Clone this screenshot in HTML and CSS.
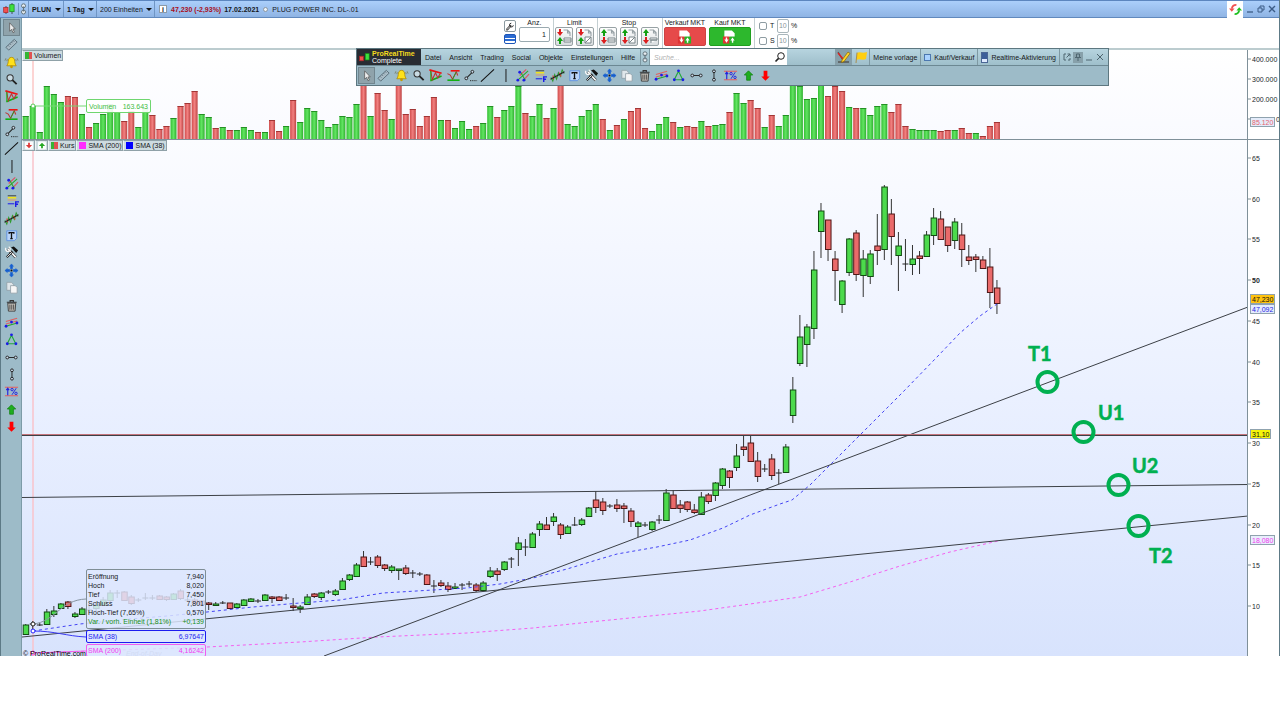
FILE: index.html
```html
<!DOCTYPE html>
<html lang="de">
<head>
    <meta charset="UTF-8">
    <title>PLUG POWER INC. - ProRealTime</title>
    <meta name="viewport" content="width=device-width, initial-scale=1">
    <link rel="stylesheet" href="styles.css">
</head>
<body>
<!-- Icons -->
<svg class="sprite" aria-hidden="true">
    <defs>
        <linearGradient id="gUp"><stop offset="0" stop-color="#35bf35"/><stop offset=".5" stop-color="#62e562"/><stop offset="1" stop-color="#2fae2f"/></linearGradient>
        <linearGradient id="gDown"><stop offset="0" stop-color="#d04c4c"/><stop offset=".5" stop-color="#f28080"/><stop offset="1" stop-color="#bc4242"/></linearGradient>
    </defs>
    <symbol id="i-logo" viewBox="0 0 12 12"><path d="M3 3v8M9 0v11" stroke="#333" stroke-width=".8"/><rect x=".7" y="4.6" width="4.3" height="5" fill="#f05050" stroke="#b02020" stroke-width=".7"/><rect x="6.8" y="1.7" width="4.3" height="7" fill="#3fe03f" stroke="#158815" stroke-width=".7"/></symbol>
    <symbol id="i-chain" viewBox="0 0 8 12"><g fill="#e8eef2" stroke="#65757e"><rect x="2" y=".8" width="4" height="4" rx="2"/><rect x="2" y="7" width="4" height="4" rx="2"/><path d="M4 3.5v5"/></g></symbol>
    <symbol id="i-cursor" viewBox="0 0 16 16"><path d="M6 3v9l2-2 1.7 3.6 1.4-.7-1.6-3.4H12z" fill="#eee" stroke="#555" stroke-width=".8"/></symbol>
    <symbol id="i-ruler" viewBox="0 0 16 16"><path d="M2 11 11 2.500l3 3L5 14z" fill="#a9bcc6" stroke="#4f6470" stroke-width=".9"/><path d="m4.500 9 1.200 1.200M6.300 7.200l1.200 1.200M8 5.500l1.200 1.200M9.800 3.900 11 5.100" stroke="#4f6470" stroke-width=".8"/></symbol>
    <symbol id="i-bell" viewBox="0 0 16 16"><path d="M8 2.500c-2.600 0-3.300 2-3.500 4.500S3.500 10.500 3 11.500h10c-.5-1-1.300-2-1.500-4.500S10.600 2.500 8 2.500z" fill="#ffe11a" stroke="#a98600" stroke-width=".8"/><circle cx="8" cy="12.500" r="1.500" fill="#c49a00"/><path d="M2 3.500 1 6M14 3.500 15 6M3.500 4.500 3 6.500M12.500 4.500l.5 2" stroke="#6d6d4c" stroke-width=".7" fill="none"/></symbol>
    <symbol id="i-zoom" viewBox="0 0 16 16"><circle cx="6.500" cy="6.200" r="3.300" fill="#c9dbe3" stroke="#333" stroke-width="1.100"/><path d="m9 8.700 4.500 4.300" stroke="#222" stroke-width="2"/></symbol>
    <symbol id="i-pattern" viewBox="0 0 16 16"><path d="m1.500 2 13 3.500" stroke="#f01010" stroke-width="1.700"/><path d="m2.500 13.500 12-5" stroke="#12b012" stroke-width="1.700"/><path d="m3 3 1.500 9.500L8 5l2.500 5.500L13 6" fill="none" stroke="#c03030" stroke-width="1.100"/><path d="M3 3v10" stroke="#12b012"/></symbol>
    <symbol id="i-support" viewBox="0 0 16 16"><path d="M5 3h9.500" stroke="#f01010" stroke-width="1.700"/><path d="M1.500 13h13" stroke="#12b012" stroke-width="1.700"/><path d="m1.500 6 3 1.500L7 12l4-8 1.500 4" fill="none" stroke="#c03030" stroke-width="1.100"/><path d="m7 12 4-8" stroke="#259c25"/></symbol>
    <symbol id="i-segment" viewBox="0 0 16 16"><path d="m4 10.500 6-6" stroke="#222" stroke-width="1.100"/><circle cx="3.500" cy="11" r="1.500" fill="#cde" stroke="#222"/><circle cx="10" cy="4" r="1.500" fill="#cde" stroke="#222"/><path d="M7.500 13.500H15" stroke="#222" stroke-dasharray="1.300 1"/></symbol>
    <symbol id="i-line" viewBox="0 0 16 16"><path d="m1 14.500 14-13" stroke="#111" stroke-width="1.100"/></symbol>
    <symbol id="i-vline" viewBox="0 0 16 16"><path d="M8.500 1v14" stroke="#222" stroke-width="1.100"/></symbol>
    <symbol id="i-fork" viewBox="0 0 16 16"><path d="m5 8 7-6.500M9 13l6-6.500" stroke="#e05060" stroke-width="1.100"/><path d="m3 13 11-10M6 4.500 11 13" stroke="#2aa52a" stroke-width="1.100"/><g fill="#1c1ce8"><circle cx="5" cy="4.500" r="1.500"/><circle cx="3" cy="13" r="1.500"/><circle cx="9.500" cy="13" r="1.500"/></g></symbol>
    <symbol id="i-fibo" viewBox="0 0 16 16"><path d="M4 3h9" stroke="#333"/><path d="M4 5h9" stroke="#f2e21c" stroke-width="1.800"/><path d="M4 7.500h9" stroke="#e89a60"/><path d="M4 11.500h7" stroke="#1c1ce8" stroke-width="1.100"/><path d="M12.500 15V9.500H16M12.500 12H15" fill="none" stroke="#1c1ce8" stroke-width="1.500"/></symbol>
    <symbol id="i-regress" viewBox="0 0 16 16"><path d="m1 10 2 4 2-7 2 5 2-7 2 4 2-7 2 4" fill="none" stroke="#2d9a2d" stroke-width="1.100"/><path d="m3 8 1 4m6-7 2 4" stroke="#e04030" stroke-width="1.100"/><path d="m.5 12 15-8" stroke="#222" stroke-width="1.100"/></symbol>
    <symbol id="i-text" viewBox="0 0 16 16"><path d="M3 3h10.500v8l-2.500 2.500H3z" fill="#b9d3f7" stroke="#5f92e0"/><path d="M5.500 6V5h5v1M8 5v6.300M6.700 11.300h2.600" fill="none" stroke="#111" stroke-width="1.400"/></symbol>
    <symbol id="i-tools" viewBox="0 0 16 16"><path d="m4 4 8.500 9" stroke="#444" stroke-width="3.200"/><path d="m4 4 8.500 9" stroke="#fff" stroke-width="1.700"/><path d="M2 3a2.500 2.500 0 1 0 3-1" fill="none" stroke="#f6f6f6" stroke-width="1.400"/><path d="m3 13 6-6" stroke="#222" stroke-width="2.200"/><path d="m3.300 12.700 5-5" stroke="#e9e9e9"/><path d="m7.500 2.500 3-1L15 5.500l-2 3z" fill="#111"/></symbol>
    <symbol id="i-move" viewBox="0 0 16 16"><path d="m8 1 2 2.500H9V6H7V3.500H6zM8 15l2-2.500H9V10H7v2.500H6zM1 8l2.500-2v1H6v2H3.500v1zM15 8l-2.500-2v1H10v2h2.500v1z" fill="#155fd0" stroke="#155fd0" stroke-width=".7"/><rect x="7" y="7" width="2" height="2" fill="#111"/></symbol>
    <symbol id="i-copy" viewBox="0 0 16 16"><path d="M3 2.500h5l2 2V11H3z" fill="#dfe6ea" stroke="#8d9ba3" stroke-width=".8"/><path d="M7 6h5l2 2v6H7z" fill="#f6f6f6" stroke="#8d9ba3" stroke-width=".8"/></symbol>
    <symbol id="i-trash" viewBox="0 0 16 16"><path d="M4 5.500h8.500l-.7 8.500H4.700z" fill="#c7c2ba" stroke="#333" stroke-width=".9"/><path d="M3 4.500h10.500M6.500 4V2.800H10V4" stroke="#333" fill="none" stroke-width="1.200"/><path d="M6.300 7v5.500M8.300 7v5.500M10.300 7v5.500" stroke="#444"/></symbol>
    <symbol id="i-channel" viewBox="0 0 16 16"><path d="m2 7 12-3.500M2 9.500l12-3" stroke="#e06060" stroke-width="1.100"/><path d="m2 12 12-3.500" stroke="#2aa52a" stroke-width="1.300"/><g fill="#1c1ce8"><circle cx="2.200" cy="12" r="1.500"/><circle cx="13.800" cy="8.500" r="1.500"/><circle cx="8" cy="7.500" r="1.500"/></g></symbol>
    <symbol id="i-triangle" viewBox="0 0 16 16"><path d="m8 3.500 4.500 9h-9z" fill="none" stroke="#23a83b" stroke-width="1.200"/><g fill="#1c1ce8"><circle cx="8" cy="3" r="1.500"/><circle cx="3.500" cy="12.500" r="1.500"/><circle cx="12.700" cy="12.500" r="1.500"/></g></symbol>
    <symbol id="i-hseg" viewBox="0 0 16 16"><path d="M4 8h8" stroke="#222"/><circle cx="3.500" cy="8" r="1.500" fill="#cde" stroke="#222"/><circle cx="12.500" cy="8" r="1.500" fill="#cde" stroke="#222"/></symbol>
    <symbol id="i-vseg" viewBox="0 0 16 16"><path d="M8.500 4v8" stroke="#222"/><circle cx="8.500" cy="3.500" r="1.500" fill="#cde" stroke="#222"/><circle cx="8.500" cy="12.500" r="1.500" fill="#cde" stroke="#222"/></symbol>
    <symbol id="i-percent" viewBox="0 0 16 16"><path d="M1 3.500h14M1 12.500h14" stroke="#e85c5c" stroke-width="1.200"/><path d="M4 12V5M2.500 6.500 4 4.500l1.500 2" fill="none" stroke="#2222dd" stroke-width="1.200"/><path d="m8.500 11.500 4.500-7" stroke="#2222dd"/><g fill="none" stroke="#2222dd"><circle cx="8.600" cy="6" r="1.300"/><circle cx="12.800" cy="10" r="1.300"/></g></symbol>
    <symbol id="i-up" viewBox="0 0 16 16"><path d="m8 3 4.500 4.500H10V13H6V7.500H3.500z" fill="#1fae1f" stroke="#128012" stroke-width=".8"/></symbol>
    <symbol id="i-down" viewBox="0 0 16 16"><path d="m8 13.500 4.500-4.500H10V3H6v6H3.500z" fill="#f00"/></symbol>
    <symbol id="i-wrench" viewBox="0 0 12 12"><path d="m2.500 9.500 4-4" stroke="#222" stroke-width="2.600" stroke-linecap="round"/><path d="m2.500 9.500 4-4" stroke="#fff" stroke-width="1.200" stroke-linecap="round"/><path d="M10 4.500A2.300 2.300 0 1 1 7.500 2" fill="none" stroke="#222" stroke-width="1.100"/></symbol>
    <symbol id="i-refresh" viewBox="0 0 14 14"><path d="M8 2a5 5 0 0 0-5 4" fill="none" stroke="#f05050" stroke-width="2"/><path d="M0 6h6L3 9.500z" fill="#f05050"/><path d="M6 12a5 5 0 0 0 5-4" fill="none" stroke="#1fbf1f" stroke-width="2"/><path d="M8 8h6l-3-3.500z" fill="#1fbf1f"/></symbol>
    <symbol id="i-doc" viewBox="0 0 16 16"><path d="M7.500 2h4l2.500 2.500V8M11.500 2v3H14" fill="none" stroke="#98a2a6" stroke-width="1.100"/></symbol>
    <symbol id="i-rd" viewBox="0 0 9 9"><rect width="9" height="9" rx="1" fill="#fafcfd"/><path d="M3.500 1.500h2V4H8L4.500 7.500 1 4h2.500z" fill="#dc3c3c"/></symbol>
    <symbol id="i-gu" viewBox="0 0 9 9"><rect width="9" height="9" rx="1" fill="#fafcfd"/><path d="M3.500 7.500h2V5H8L4.500 1.500 1 5h2.500z" fill="#25a825"/></symbol>
    <symbol id="i-market" viewBox="0 0 16 16"><path d="M2.500 8V1h8l3 3v4" fill="#fff"/><rect x="1" y="7.500" width="7" height="7.500" fill="#e03434"/><rect x="8" y="7.500" width="7" height="7.500" fill="#28b428"/><path d="M4 8.500h1.500v2.200H7L4.800 14 2.500 10.700H4zM10.500 14H12v-2.200h1.500L11.200 8.500 9 11.800h1.500z" fill="#fff"/></symbol>
</svg>

<div class="window">
    <header class="titlebar">
        <svg class="logo"><use href="#i-logo"/></svg>
        <svg class="link"><use href="#i-chain"/></svg>
        <label class="pick strong"><select aria-label="Wert"><option>PLUN</option></select></label>
        <label class="pick strong"><select aria-label="Zeiteinheit"><option>1 Tag</option></select></label>
        <label class="pick units"><select aria-label="Einheiten"><option>200 Einheiten</option></select></label>
        <button class="info" type="button">i</button>
        <span class="quote">47,230 (-2,93%)</span>
        <span class="date">17.02.2021</span>
        <span class="state"></span>
        <span class="name">PLUG POWER INC. DL-.01</span>
        <button class="refresh" type="button" aria-label="Aktualisieren"><svg><use href="#i-refresh"/></svg></button>
        <div class="winbtns">
            <button type="button" aria-label="Minimieren"><svg viewBox="0 0 8 8"><path d="M1 7h6" stroke-width="1.300"/></svg></button>
            <button type="button" aria-label="Wiederherstellen"><svg viewBox="0 0 8 8"><path d="M3 3V1h4v4H5M1 3h4v4H1z"/></svg></button>
            <button type="button" aria-label="Schließen"><svg viewBox="0 0 8 8"><path d="m1 1 6 6M7 1 1 7" stroke-width="1.400"/></svg></button>
        </div>
    </header>

    <div class="body">
        <aside class="sidebar"><div class="tools tools-v"></div></aside>

        <main class="main">
            <!-- Orderleiste -->
            <form class="orderbar">
                <div class="side">
                    <button class="wrench" type="button" aria-label="Einstellungen"><svg><use href="#i-wrench"/></svg></button>
                    <button class="book" type="button" aria-label="Orderbuch"></button>
                </div>
                <div class="group">
                    <label for="anz">Anz.</label>
                    <input class="qty" id="anz" type="text" value="1">
                </div>
                <div class="group sep">
                    <span>Limit</span>
                    <div class="row" id="limit"></div>
                </div>
                <div class="group sep">
                    <span>Stop</span>
                    <div class="row" id="stop"></div>
                </div>
                <div class="group sep">
                    <label for="sell">Verkauf MKT</label>
                    <button class="market sell" id="sell" type="button"><svg><use href="#i-market"/></svg></button>
                </div>
                <div class="group">
                    <label for="buy">Kauf MKT</label>
                    <button class="market buy" id="buy" type="button"><svg><use href="#i-market"/></svg></button>
                </div>
                <div class="limits">
                    <div class="limit"><label><input type="checkbox">T</label><input class="pct" type="text" value="10" aria-label="Target"><span>%</span></div>
                    <div class="limit"><label><input type="checkbox">S</label><input class="pct" type="text" value="10" aria-label="Stop"><span>%</span></div>
                </div>
            </form>

            <section class="panel volume">
                <div class="plot">
                    <svg class="canvas" id="volume" viewBox="22 50 1226 89" preserveAspectRatio="xMinYMin slice"></svg>
                    <div class="tags"><button type="button"><i class="sw kurs"></i>Volumen</button></div>
                    <div class="voltip"><span>Volumen</span><span>163.643</span></div>
                </div>
                <svg class="axis" id="volaxis" viewBox="1247 50 32 89"></svg>
            </section>

            <section class="panel price">
                <div class="plot">
                    <svg class="canvas" id="price" viewBox="22 140 1226 516" preserveAspectRatio="xMinYMin slice"></svg>
                    <div class="tags">
                        <button class="mini" type="button" aria-label="Verkaufen"><svg><use href="#i-rd"/></svg></button>
                        <button class="mini" type="button" aria-label="Kaufen"><svg><use href="#i-gu"/></svg></button>
                        <button type="button"><i class="sw kurs"></i>Kurs</button>
                        <button type="button"><i class="sw sma200"></i>SMA (200)</button>
                        <button type="button"><i class="sw sma38"></i>SMA (38)</button>
                    </div>
                    <div class="tips">
                        <dl class="tip">
                            <div><dt>Eröffnung</dt><dd>7,940</dd></div>
                            <div><dt>Hoch</dt><dd>8,020</dd></div>
                            <div><dt>Tief</dt><dd>7,450</dd></div>
                            <div><dt>Schluss</dt><dd>7,801</dd></div>
                            <div><dt>Hoch-Tief (7,65%)</dt><dd>0,570</dd></div>
                            <div class="var"><dt>Var. / vorh. Einheit (1,81%)</dt><dd>+0,139</dd></div>
                        </dl>
                        <dl class="tip blue"><div><dt>SMA (38)</dt><dd>6,97647</dd></div></dl>
                        <dl class="tip pink"><div><dt>SMA (200)</dt><dd>4,16242</dd></div></dl>
                    </div>
                </div>
                <svg class="axis" id="priceaxis" viewBox="1247 140 32 516"></svg>
            </section>

            <!-- ProRealTime Leiste -->
            <div class="palette">
                <div class="menubar">
                    <div class="brand"><svg><use href="#i-logo"/></svg><div><b>ProRealTime</b><span>Complete</span></div></div>
                    <nav>
                        <button type="button">Datei</button>
                        <button type="button">Ansicht</button>
                        <button type="button">Trading</button>
                        <button type="button">Social</button>
                        <button type="button">Objekte</button>
                        <button type="button">Einstellungen</button>
                        <button type="button">Hilfe</button>
                    </nav>
                    <svg class="chain"><use href="#i-chain"/></svg>
                    <div class="search">
                        <input type="search" placeholder="Suche..." aria-label="Suche">
                        <svg viewBox="0 0 12 12"><circle cx="7" cy="5" r="3.300" fill="none" stroke="#222"/><path d="M4.600 7.400 1.500 10.500" stroke="#222" stroke-width="1.600"/></svg>
                    </div>
                    <button class="tile on" type="button" aria-label="Zeichnen"><svg viewBox="0 0 14 14"><path d="M1 2 7 12M1 12h11" stroke="#555" stroke-width="1.300"/><path d="m1 3 6 7" stroke="#e02020" stroke-width="1.300"/><path d="m5 10 6-8 2 1.500-6 8-2.500 1z" fill="#ffd428" stroke="#8b6800" stroke-width=".7"/></svg></button>
                    <button class="tile" type="button" aria-label="Markierung"><svg viewBox="0 0 14 14"><path d="M3 3c3-2 5 1 10-1l-1 7c-4 2-6-1-9.500 1z" fill="#ffcf10"/><path d="M3 2.500 2 13" stroke="#a98f50"/></svg></button>
                    <button class="cell" type="button">Meine vorlage</button>
                    <button class="cell" type="button"><i class="box"></i>Kauf/Verkauf</button>
                    <button class="cell" type="button"><i class="rt"></i>Realtime-Aktivierung</button>
                    <div class="pbtns">
                        <button type="button" aria-label="Andocken"><svg viewBox="0 0 8 8"><path d="M3 1H1v6h2M5 7h2V5M3.500 4.500 7 1M4.500 1H7v2.500"/></svg></button>
                        <button class="on" type="button" aria-label="Anheften"><svg viewBox="0 0 8 8"><path d="M2.500 1h3v3.500h-3zM1 4.500h6M4 4.500V8"/></svg></button>
                        <button type="button" aria-label="Minimieren"><svg viewBox="0 0 8 8"><path d="M1 7h6"/></svg></button>
                        <button type="button" aria-label="Schließen"><svg viewBox="0 0 8 8"><path d="m1 1 6 6M7 1 1 7"/></svg></button>
                    </div>
                </div>
                <div class="toolrow"><div class="tools tools-h"></div></div>
            </div>
        </main>
    </div>
</div>
<script src="chart.js"></script>
</body>
</html>
```

FILE: styles.css
```css
* { box-sizing: border-box; }
body { margin: 0; background: #fff; color: #16181a; font: 7px/9px "Liberation Sans", Arial, sans-serif; }
button, input, select { font: inherit; color: inherit; margin: 0; padding: 0; border: 0; background: none; border-radius: 0; }
button { cursor: pointer; display: flex; align-items: center; justify-content: center; }
svg { display: block; }
.sprite { position: absolute; width: 0; height: 0; }

.window { border-right: 1px solid #5d7a86; }
.body { display: flex; }
.main { flex: 1; min-width: 0; position: relative; }

/* Titelleiste */
.titlebar { display: flex; align-items: center; height: 18px; background: linear-gradient(#abcffb, #8fb4e4); border-top: 1px solid #5c86bf; border-bottom: 1px solid #6189bd; white-space: nowrap; }
.logo { width: 12px; height: 12px; margin: 0 3px; }
.link { width: 10px; height: 12px; border-left: 1px solid #6f95c4; }
.pick { display: flex; align-items: center; align-self: stretch; gap: 3px; padding: 0 2px 0 3px; border-left: 1px solid #6f95c4; }
.pick select { appearance: none; outline: none; }
.pick::after { content: ""; border: 3px solid transparent; border-top-color: #111; border-bottom: 0; }
.units { border-right: 1px solid #6f95c4; }
.strong, .date { font-weight: bold; }
.info { width: 8px; height: 8px; margin: 0 4px; background: #fff; border: 1px solid #8c9aa8; font-weight: bold; }
.quote { color: #a80f1c; font-weight: bold; }
.date { margin: 0 4px 0 3px; }
.state { width: 5px; height: 5px; border: 1px solid #8d98a2; border-radius: 50%; background: #eef3f8; margin-right: 4px; }
.name { flex: 1; }
.refresh { width: 16px; height: 17px; background: #fff; }
.refresh svg { width: 13px; height: 13px; }
.winbtns { display: flex; gap: 3px; padding: 0 3px; }
.winbtns svg { width: 8px; height: 8px; fill: none; stroke: #3c5c86; }

/* Werkzeuge */
.sidebar { width: 22px; padding: 1px 2px; background: #9dbbc8; border-left: 1px solid #5d7a86; border-right: 1px solid #7d9ba8; }
.tools { display: flex; justify-content: space-between; }
.tools-v { flex-direction: column; height: 416px; }
.tools-h { width: 416px; }
.tools button { width: 17px; height: 17px; border: 1px solid transparent; }
.tools button.on { background: #8fa3ab; border-color: #71868f; }
.tools svg { width: 15px; height: 15px; }

/* Orderleiste */
.orderbar { display: flex; justify-content: center; gap: 3px; height: 32px; border-bottom: 2px solid #bccccf; }
.side { display: flex; flex-direction: column; gap: 2px; padding-top: 2px; }
.side button { width: 12px; height: 12px; border: 1px solid #8b999f; border-radius: 2px; }
.side svg { width: 11px; height: 11px; }
.side .book { height: 10px; border-color: #1c55b8; background: linear-gradient(#2b6bd2 40%, #fff 40% 54%, #2b6bd2 54% 74%, #fff 74%); }
.group { display: flex; flex-direction: column; align-items: center; white-space: nowrap; }
.group .row { display: flex; gap: 3px; }
.sep { border-left: 1px solid #c4cfd2; padding-left: 1px; }
.qty { width: 31px; height: 15px; border: 1px solid #9aaab0; border-radius: 2px; text-align: right; padding-right: 3px; }
.row button { width: 18px; height: 19px; border: 1px solid #98a2a5; border-radius: 2px; background: linear-gradient(#fff, #d9dddf); }
.row svg { width: 16px; height: 17px; }
.market { width: 42px; height: 19px; border: 1px solid #c44; border-radius: 2px; }
.market svg { width: 15px; height: 16px; }
.sell { background: #e64a4a; }
.buy { background: #2db82d; border-color: #1f9f1f; }
.limits { display: flex; flex-direction: column; padding-left: 4px; border-left: 1px solid #c4cfd2; }
.limit { display: flex; align-items: center; gap: 2px; height: 15px; }
.limit label { display: flex; align-items: center; gap: 3px; width: 16px; }
.limit input[type="checkbox"] { appearance: none; width: 8px; height: 8px; border: 1px solid #8e9ca2; border-radius: 2px; }
.pct { width: 12px; height: 14px; border: 1px solid #a9b6bb; border-radius: 2px; text-align: center; color: #8a9499; }

/* Charts */
.panel { display: flex; }
.plot { position: relative; flex: 1; min-width: 0; overflow: hidden; }
.volume { height: 90px; border-bottom: 1px solid #7f9099; }
.volume .plot { background: linear-gradient(#fff, #f9faff); }
.price { height: 516px; }
.price .plot { background: linear-gradient(#fbfcff, #eaf0ff 50%, #d8e3fd); }
.canvas { width: 100%; height: 100%; }
.axis { width: 32px; height: 100%; flex: none; }
.grid-label { fill: #22262a; }
.tags { position: absolute; top: 0; left: 0; display: flex; }
.tags button { gap: 2px; height: 11px; padding: 0 1px 0 2px; background: #cddbe0; border: 1px solid #8fa1a8; border-left-color: #eef4f6; white-space: nowrap; }
.tags .mini { width: 13px; }
.mini svg { width: 9px; height: 9px; }
.sw { width: 7px; height: 7px; }
.kurs { background: linear-gradient(90deg, #35b535 50%, #e05252 50%); }
.sma200 { background: #ff2cff; }
.sma38 { background: #0000ff; }
.voltip { position: absolute; left: 64px; top: 49px; width: 65px; height: 14px; padding: 0 2px; display: flex; align-items: center; justify-content: space-between; color: #45bd45; border: 1px solid #6fd66f; border-radius: 2px; background: rgba(255, 255, 255, .9); }
.tips { position: absolute; left: 64px; top: 429px; width: 120px; display: flex; flex-direction: column; gap: 1px; }
.tip { margin: 0; padding: 2px 1px; border: 1px solid #7f8e96; border-radius: 2px; background: rgba(222, 231, 254, .84); }
.tip div { display: flex; justify-content: space-between; }
.tip dt, .tip dd { margin: 0; }
.tip .var { color: #189018; }
.tip.blue { padding: 1px; color: #1c1cf0; border-color: #1c1cf0; }
.tip.pink { padding: 1px; color: #f23cf2; border-color: #f05cf0; }

/* ProRealTime Leiste */
.palette { position: absolute; left: 334px; top: 30px; width: 753px; max-width: 100%; border: 1px solid #5d7780; background: #9dbbc8; }
.menubar { display: flex; height: 17px; background: linear-gradient(#b7d4df, #9fbfcb); border-bottom: 1px solid #6c8893; white-space: nowrap; }
.brand { display: flex; align-items: center; gap: 2px; width: 64px; padding-left: 2px; background: #282c33; color: #fff; line-height: 7px; }
.brand svg { width: 11px; height: 11px; }
.brand b { display: block; color: #f5dc1e; }
.brand span { display: block; }
.menubar nav { display: flex; gap: 8px; padding: 0 5px 0 4px; }
.chain { width: 10px; height: 16px; padding: 2px 0; border: solid #7e99a3; border-width: 0 1px; }
.search { display: flex; align-items: center; width: 137px; background: #fff; margin-right: auto; }
.search input { flex: 1; min-width: 0; padding-left: 4px; }
.search input::placeholder { color: #b0b0b0; font-style: italic; opacity: 1; }
.search svg { width: 12px; height: 12px; margin-right: 1px; }
.tile { width: 17px; }
.tile svg { width: 14px; height: 14px; }
.on { background: #87a0aa; }
.cell { padding: 0 3px; gap: 3px; border-left: 1px solid #7e99a3; }
.box { width: 7px; height: 7px; background: #a9d2ff; border: 1px solid #4c78b0; }
.rt { width: 7px; height: 11px; background: linear-gradient(#3c5f9a 70%, #dfeaff 70%); border: 1px solid #4b6795; }
.pbtns { display: flex; align-items: center; gap: 1px; padding: 0 3px 0 2px; border-left: 1px solid #7e99a3; }
.pbtns button { width: 10px; height: 11px; }
.pbtns svg { width: 8px; height: 8px; fill: none; stroke: #4f6670; }
.toolrow { padding: 1px; height: 19px; }
```

FILE: chart.js
```javascript
// Position der Kerzen
var X0 = 25.7, STEP = 7.038;
function cx(i) { return X0 + STEP * i; }

// Volumen je Tag, Farbe + Hoehe (20 = 100.000)
var volume = ('g23 g33 g7 g53 g45 g37 r43 r42 g25 r12 g16 g25 g35 g27 r18 r28 g12 g31 r24 r10 ' +
    'r13 g21 r33 r36 r48 g25 g22 r11 g12 r9 g9 g12 g9 r7 g7 r19 r8 g13 r39 g17 ' +
    'g31 g28 g19 g12 g15 g23 g22 g35 r60 g23 r46 r29 g20 r58 r25 r30 r13 r23 r42 g19 ' +
    'r19 g11 g18 g10 r13 g16 g33 r22 g29 g33 g53 r26 g23 g35 r21 g31 r58 g15 g13 g23 ' +
    'g29 g35 r20 g9 r14 g20 r28 r31 r11 g8 g15 g22 r17 g12 r13 r12 g18 r13 g14 g15 ' +
    'r27 g46 g36 r39 r31 g12 r24 g13 g24 g56 g53 g40 g41 g58 r43 r53 r48 g32 r31 g31 ' +
    'g24 g33 g35 r27 r35 r13 g10 g9 g9 g9 r8 r9 g9 r11 r6 g6 r3 r13 r17').split(' ');

// Kerzen: Farbe, Hoch, Koerper oben, Koerper unten, Tief (d = Doji)
var candles = ('g 624 625 634 635|d 621 624 624 630|d 623 625 625 626|g 609 612 624 624|g 606 611 614 617|' +
    'g 603 604 608 609|r 601 602 606 609|g 612 614 616 618|g 607 609 614 615|d 606 610 610 613|' +
    'g 602 605 608 611|g 597 600 605 606|g 590 593 600 602|d 590 593 593 598|r 591 592 600 601|' +
    'r 595 597 603 605|d 598 600 600 602|d 593 598 598 600|d 595 598 598 600|r 595 596 599 600|' +
    'r 596 597 599 601|g 593 594 599 600|r 589 591 598 600|d 596 600 600 602|r 598 600 603 604|' +
    'r 600 601 604 605|r 602 603 604 610|g 602 604 605 606|d 601 603 603 604|r 603 603 608 608|' +
    'g 603 604 607 608|g 599 600 605 606|g 598 599 601 602|d 599 601 601 603|g 594 595 600 600|' +
    'r 596 597 598 603|r 596 597 600 600|d 594 598 598 600|r 598 606 607 611|g 605 607 608 613|' +
    'g 594 597 604 605|r 593 594 596 598|g 592 593 597 600|d 590 592 592 594|g 589 591 594 596|' +
    'g 578 581 589 590|g 574 575 579 581|g 563 565 576 577|r 551 557 566 567|d 557 562 562 565|' +
    'r 555 557 565 568|r 564 565 568 571|g 565 567 570 573|g 569 569 570 580|r 565 568 573 575|' +
    'd 570 573 573 578|d 572 574 574 576|r 574 575 584 585|d 580 586 586 593|r 580 583 585 587|' +
    'r 582 586 589 592|g 583 587 588 589|d 583 585 585 590|d 581 584 584 587|r 583 585 590 592|' +
    'g 581 583 590 591|g 567 571 576 578|r 568 571 574 581|g 561 562 569 571|d 557 559 559 568|' +
    'g 537 543 549 566|d 539 547 547 556|g 532 534 547 548|g 521 524 529 536|r 517 525 529 529|' +
    'g 513 517 521 526|r 523 525 534 539|g 525 527 533 534|d 517 525 525 526|g 518 520 524 526|' +
    'g 507 508 516 517|r 491 500 507 513|r 498 502 510 515|d 504 506 506 508|r 499 505 508 512|' +
    'r 503 506 508 523|r 508 511 521 527|g 521 523 526 537|d 522 525 525 527|g 521 522 529 531|' +
    'd 515 520 520 524|g 489 493 520 521|r 490 495 508 508|r 500 505 508 513|r 501 502 509 512|' +
    'r 504 510 512 514|g 492 497 514 515|r 493 495 501 504|g 482 483 495 501|g 468 469 485 489|' +
    'r 470 471 477 488|g 444 456 467 471|r 435 447 449 456|r 435 443 461 462|r 452 461 476 482|' +
    'd 464 469 469 472|r 454 459 475 480|d 469 473 473 484|g 444 447 472 473|g 377 390 415 423|' +
    'g 315 337 363 366|g 324 327 344 367|g 251 270 328 339|g 203 211 231 258|r 220 220 249 261|' +
    'r 251 259 270 301|g 280 281 304 313|g 238 239 272 276|r 230 233 274 281|g 250 259 275 297|' +
    'g 250 254 276 284|r 214 246 250 265|g 185 187 249 260|r 199 214 236 265|g 232 246 255 291|' +
    'd 239 264 264 271|g 245 259 264 275|r 251 256 258 274|g 231 235 256 257|g 208 218 235 245|' +
    'r 211 219 239 240|r 227 227 245 252|g 218 222 240 249|r 223 235 249 267|r 245 257 260 265|' +
    'r 254 257 259 272|r 256 260 268 268|r 248 267 292 308|r 280 288 303 314').split('|');

var sma38 = '33,631 80,624 130,619 167,616 207,612 253,607 300,603 340,600 383,593 433,590 467,588 500,584 533,578 567,569 600,559 617,554 657,547 690,540 723,528 750,515 780,504 792,500 810,485 857,438 903,392 937,357 960,333 980,316 997,304';
var sma200 = '33,653 120,650 207,647 300,642 377,637 467,633 533,628 600,621 650,616 700,611 750,604 800,597 850,582 900,566 950,552 998,541';

// Volumen
var out = '<path d="M33 60V139" stroke="#fbc6c6" stroke-width="1.500"/>';
volume.forEach(function (v, i) {
    var h = +v.slice(1), up = v[0] === 'g';
    var x = cx(i) - 3;
    out += '<rect x="' + x + '" y="' + (139 - h) + '" width="6" height="' + h + '" fill="url(#' + (up ? 'gUp' : 'gDown') + ')"/>' +
        '<path d="M' + x + ' ' + (139.5 - h) + 'h6" stroke="' + (up ? '#249024' : '#a13636') + '"/>';
});
out += '<path d="M33 106H86" stroke="#74d874"/><circle cx="33" cy="106" r="2" fill="#fff" stroke="#58cc58"/>';
document.getElementById('volume').innerHTML = out;

// Kurs
out = '<path d="M33 140V656" stroke="#f9c3cb" stroke-width="1.500"/>';
candles.forEach(function (c, i) {
    var p = c.split(' '), x = cx(i);
    out += '<path d="M' + x + ' ' + p[1] + 'V' + p[4] + '" stroke="#333"/>';
    if (p[0] === 'd') {
        out += '<path d="M' + (x - 3) + ' ' + p[2] + 'h6" stroke="#222"/>';
    } else {
        out += '<rect x="' + (x - 2.5) + '" y="' + p[2] + '" width="5.500" height="' + (p[3] - p[2] + 0.5) +
            '" fill="' + (p[0] === 'g' ? '#4cda4c' : '#ea6a6a') + '" stroke="' + (p[0] === 'g' ? '#124a12' : '#4e1616') + '"/>';
    }
});
out += '<g fill="none"><polyline points="' + sma38 + '" stroke="#4444f4" stroke-dasharray="3 3"/>' +
    '<polyline points="' + sma200 + '" stroke="#f560f0" stroke-dasharray="3 3"/>' +
    '<path d="M324 656 1248 307M22 497.500 1248 484.500M22 637 1248 516M22 435.500H1248" stroke="#3c4046"/>' +
    '<path d="M22 434.500H1248" stroke="#c4747c"/>' +
    '<path d="M33 624C55 622 60 600 86 599" stroke="#8795a0"/>' +
    '<path d="M33 631C55 631 66 636 86 637" stroke="#3a3af5"/>' +
    '<path d="M33 653 86 651" stroke="#f560f0"/></g>' +
    '<g fill="#fff"><circle cx="33" cy="624" r="2" stroke="#222"/><circle cx="33" cy="631" r="2" stroke="#22f"/><circle cx="33" cy="653" r="2" stroke="#f3c"/></g>' +
    '<text x="23" y="656">© ProRealTime.com</text>' +
    '<text x="126" y="656" fill="#8f9ab4" font-style="italic">End-of-Day</text>';

// Markierungen
[['T1', 1047.5, 382, 1028, 361], ['U1', 1083.5, 432, 1098, 420], ['U2', 1118.5, 485, 1132, 473], ['T2', 1138.5, 526, 1149, 563]].forEach(function (m) {
    out += '<circle cx="' + m[1] + '" cy="' + m[2] + '" r="10" fill="none" stroke="#00b050" stroke-width="4"/>' +
        '<text x="' + m[3] + '" y="' + m[4] + '" fill="#00b050" stroke="#00b050" stroke-width=".5" font-family="Lato, sans-serif" font-weight="bold" font-size="20">' + m[0] + '</text>';
});
document.getElementById('price').innerHTML = out;

// Skalen
function tick(y, text, bold) {
    return '<path d="M1248 ' + y + 'h3" stroke="#7f9099"/><text class="grid-label" x="1252" y="' + (y + 2.5) + '"' + (bold ? ' font-weight="bold"' : '') + '>' + text + '</text>';
}
function badge(y, text, w, bg, color) {
    return '<rect x="1250.500" y="' + (y - 4.5) + '" width="' + w + '" height="9" fill="' + bg + '" stroke="#8fa2ae"/>' +
        '<text x="1252" y="' + (y + 2.5) + '" fill="' + color + '">' + text + '</text>';
}
document.getElementById('volaxis').innerHTML = '<path d="M1247.500 50V139" stroke="#7f9099"/>' +
    tick(59, '400.000') + tick(79, '300.000') + tick(99, '200.000') +
    '<path d="M1248 119h3" stroke="#7f9099"/><text class="grid-label" x="1276" y="122">0</text>' +
    badge(122, '85.120', 24, '#e4ecfa', '#e46470');
out = '<path d="M1247.500 140V656" stroke="#7f9099"/>';
for (var p = 65; p >= 10; p -= 5) {
    out += tick(Math.round(606 - (p - 10) * 8.145), p, p === 50);
}
out += badge(309, '47,092', 24, '#e4ecfe', '#2424e0') + badge(299, '47,230', 24, '#ffc20e', '#111') +
    badge(434, '31,10', 20, '#f5f50a', '#111') + badge(540, '18,080', 24, '#e9eefc', '#ee3cee');
document.getElementById('priceaxis').innerHTML = out;

// Werkzeugleisten
var tools = ['cursor', 'ruler', 'bell', 'zoom', 'pattern', 'support', 'segment', 'line', 'vline', 'fork', 'fibo', 'regress',
    'text', 'tools', 'move', 'copy', 'trash', 'channel', 'triangle', 'hseg', 'vseg', 'percent', 'up', 'down'];
document.querySelectorAll('.tools').forEach(function (bar) {
    bar.innerHTML = tools.map(function (t, i) {
        return '<button type="button" aria-label="' + t + '"' + (i ? '' : ' class="on"') + '><svg><use href="#i-' + t + '"/></svg></button>';
    }).join('');
});

// Orderknoepfe
var extras = ['M8 10h7v4H8zM8 12h7', 'M8 9h6v6H8zM8 15l6-6', 'M8 10h7v2H8zM9 15v-3h6'];
function order(first, kind) {
    var red = 'M3 0h2v3h2L4 7 1 3h2z', green = 'M3 7h2V4h2L4 0 1 4h2z';
    return '<button type="button" aria-label="Order"><svg viewBox="0 0 16 17">' +
        '<use href="#i-doc" width="16" height="16"/>' +
        '<path transform="translate(0 1)" d="' + (first ? red : green) + '" fill="' + (first ? '#dc1e1e' : '#12a012') + '"/>' +
        '<path transform="translate(0 9)" d="' + (first ? green : red) + '" fill="' + (first ? '#12a012' : '#dc1e1e') + '"/>' +
        '<path d="' + extras[kind] + '" fill="#fff" stroke="#7b868a"/></svg></button>';
}
document.getElementById('limit').innerHTML = order(true, 0) + order(true, 1);
document.getElementById('stop').innerHTML = order(false, 0) + order(false, 1) + order(false, 2);
```
